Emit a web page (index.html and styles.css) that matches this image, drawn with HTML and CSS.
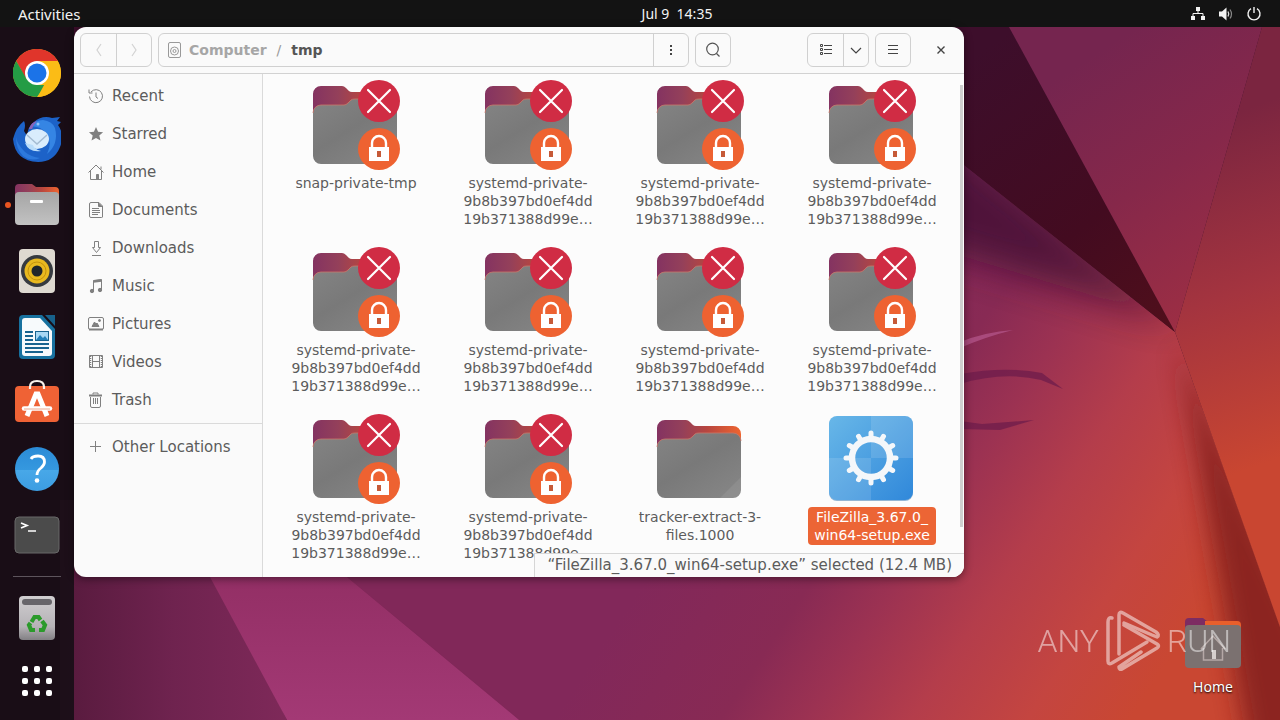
FILE: index.html
```html
<!DOCTYPE html>
<html lang="en">
<head>
<meta charset="utf-8">
<title>tmp</title>
<link rel="stylesheet" href="styles.css">
</head>
<body>
<svg class="wallpaper" viewBox="0 0 1280 720" preserveAspectRatio="none" aria-hidden="true">
  <defs>
    <linearGradient id="w-low" gradientUnits="userSpaceOnUse" x1="716" y1="472" x2="1119" y2="737">
      <stop offset="0" stop-color="#82285a"/><stop offset=".29" stop-color="#882a54"/><stop offset=".44" stop-color="#9c3252"/><stop offset=".62" stop-color="#b43d4b"/><stop offset=".82" stop-color="#c44540"/><stop offset="1" stop-color="#c94732"/>
    </linearGradient>
    <linearGradient id="w-up" gradientUnits="userSpaceOnUse" x1="1040" y1="90" x2="1190" y2="320">
      <stop offset="0" stop-color="#75254f"/><stop offset=".5" stop-color="#86284a"/><stop offset="1" stop-color="#9c2e44"/>
    </linearGradient>
    <linearGradient id="w-dark" gradientUnits="userSpaceOnUse" x1="970" y1="60" x2="1170" y2="330">
      <stop offset="0" stop-color="#3d0e2b"/><stop offset=".6" stop-color="#430b20"/><stop offset="1" stop-color="#500f1b"/>
    </linearGradient>
    <linearGradient id="w-right" gradientUnits="userSpaceOnUse" x1="1215" y1="120" x2="1330" y2="440">
      <stop offset="0" stop-color="#7b2540"/><stop offset=".5" stop-color="#a4343f"/><stop offset="1" stop-color="#c94631"/>
    </linearGradient>
    <linearGradient id="w-left" x1="0" x2="1" y1="0" y2="0">
      <stop offset="0" stop-color="#571a3d"/><stop offset=".5" stop-color="#6f234f"/><stop offset="1" stop-color="#7e2959"/>
    </linearGradient>
    <linearGradient id="w-beam" x1="0" x2="0" y1="0" y2="1">
      <stop offset="0" stop-color="#932f65"/><stop offset="1" stop-color="#a33975"/>
    </linearGradient>
    <clipPath id="w-clip"><path d="M940 146 1175 332 1282 632V720H940z"/></clipPath>
    <filter id="w-blur" x="-50%" y="-20%" width="200%" height="140%"><feGaussianBlur stdDeviation="12"/></filter>
    <filter id="w-haze" x="-50%" y="-50%" width="200%" height="200%"><feGaussianBlur stdDeviation="18"/></filter>
  </defs>
  <path fill="#3a0d29" d="M0 0h1280v720H0z"/>
  <path fill="url(#w-low)" d="M940 146 1175 332 1282 632V720H300V400z"/>
  <g clip-path="url(#w-clip)">
    <path fill="#3c0c30" opacity=".75" filter="url(#w-haze)" d="M1180 322 860 60V225z"/>
    <path fill="#7d1b1b" opacity=".8" filter="url(#w-blur)" d="M1178 345 1310 640V760H1250z"/>
  </g>
  <path fill="url(#w-dark)" d="M940 27H1009L1175 332 940 146z"/>
  <path fill="url(#w-up)" d="M1009 27H1262L1175 332z"/>
  <path fill="url(#w-right)" d="M1262 27H1280V627L1175 332z"/>
  <path fill="url(#w-left)" d="M60 500H180L287 720H60z"/>
  <path fill="url(#w-beam)" d="M210 577H347L519 720H287z"/>
  <path fill="#812859" d="M255 420H520V720L347 577z"/>
  <path fill="#b05286" opacity=".8" d="M960 342Q985 332 1013 330 985 337 960 348z"/>
  <path fill="#6e1c4b" opacity=".75" d="M960 374Q1005 366 1042 373L1063 389 1041 380Q1003 371 960 384zM960 421 982 424 1034 420 1000 430 960 429z"/>
</svg>

<svg class="defs" aria-hidden="true">
  <defs>
    <linearGradient id="tab" x1="0" x2="1" y1="0" y2="0"><stop offset="0" stop-color="#843361"/><stop offset=".3" stop-color="#94405a"/><stop offset=".6" stop-color="#b8463f"/><stop offset="1" stop-color="#ee6530"/></linearGradient>
    <linearGradient id="front" x1="0" x2=".8" y1="0" y2="1"><stop offset="0" stop-color="#848484"/><stop offset=".5" stop-color="#797979"/><stop offset="1" stop-color="#858585"/></linearGradient>
    <linearGradient id="silver" x1="0" x2="0" y1="0" y2="1"><stop offset="0" stop-color="#a5a5a5"/><stop offset="1" stop-color="#c2c2c2"/></linearGradient>
    <linearGradient id="bin" x1="0" x2="0" y1="0" y2="1"><stop offset="0" stop-color="#d0ced0"/><stop offset=".7" stop-color="#b5b2b6"/><stop offset="1" stop-color="#828084"/></linearGradient>
    <linearGradient id="exe" x1="0" x2="1" y1="0" y2="1"><stop offset="0" stop-color="#68b7e8"/><stop offset="1" stop-color="#3088da"/></linearGradient>
    <linearGradient id="help" x1="0" x2="0" y1="0" y2="1"><stop offset="0" stop-color="#2b8bd6"/><stop offset=".52" stop-color="#3598df"/><stop offset=".53" stop-color="#48a8e8"/><stop offset="1" stop-color="#3c9de2"/></linearGradient>
    <symbol id="folder" viewBox="0 0 96 96">
      <path fill="url(#tab)" d="M5 78V17a8 8 0 0 1 8-8h21q2 0 4 2l3 3q1 1 3 1h37a8 8 0 0 1 8 8v55z"/>
      <path fill="url(#front)" d="M5 79V36a8 8 0 0 1 8-8h23q2 0 4-2l3-3q1-1 4-1h34a8 8 0 0 1 8 8v49a8 8 0 0 1-8 8H13a8 8 0 0 1-8-8z"/>
      <path fill="none" stroke="#c9796a" stroke-width=".8" d="M5 36a8 8 0 0 1 8-8h23q2 0 4-2l3-3q1-1 4-1h34a8 8 0 0 1 8 8"/>
    </symbol>
    <symbol id="locked" viewBox="0 0 96 96">
      <use href="#folder"/>
      <circle cx="71" cy="24" r="21" fill="#d02c44"/><path d="M60 13 82 35M82 13 60 35" stroke="#fff" stroke-width="2.200" stroke-linecap="round"/>
      <circle cx="71" cy="72" r="21" fill="#ee6231"/><path fill="#fff" d="M61 70h20v14H61z"/><path d="M64 71v-5a7 7 0 0 1 14 0v5" fill="none" stroke="#fff" stroke-width="2.400"/><path fill="#c65a38" d="M69 74h4v6h-4z"/>
    </symbol>
    <symbol id="open-folder" viewBox="0 0 96 96"><use href="#folder"/><path d="M68 87 89 66V79a8 8 0 0 1-8 8z" fill="#fff" opacity=".08"/></symbol>
    <symbol id="setup" viewBox="0 0 96 96">
      <rect x="5" y="6" width="84" height="84" rx="8" fill="#2a6fae" opacity=".5"/>
      <rect x="5" y="5" width="84" height="84" rx="8" fill="url(#exe)"/>
      <path fill="#fff" opacity=".12" d="M47 5h34a8 8 0 0 1 8 8v34H47z"/><path fill="#fff" opacity=".12" d="M5 47h42v42H13a8 8 0 0 1-8-8z"/>
      <circle cx="47" cy="47" r="19" fill="none" stroke="#f4f7fa" stroke-width="6.500"/>
      <g stroke="#f4f7fa" stroke-width="5" stroke-linecap="round"><path d="M47 22v5M47 67v5M22 47h5M67 47h5M34.500 25.300l2.500 4.400M59.500 25.300l-2.500 4.400M34.500 68.700l2.500-4.400M59.500 68.700l-2.500-4.400M25.300 34.500l4.400 2.500M68.700 34.500l-4.400 2.500M25.300 59.500l4.400-2.500M68.700 59.500l-4.400-2.500"/></g>
    </symbol>
  </defs>
</svg>

<header class="topbar">
  <button class="activities">Activities</button>
  <time class="clock">Jul 9&nbsp; 14:35</time>
  <button class="tray" aria-label="System menu">
    <svg width="16" height="16" viewBox="0 0 16 16"><path fill="#f2f2f2" d="M6 1h4v4H6zM1 10h4v4H1zM11 10h4v4h-4z"/><path d="M8 5v2.500M3 10V7.500h10V10" fill="none" stroke="#f2f2f2"/></svg>
    <svg width="16" height="16" viewBox="0 0 16 16"><path fill="#f2f2f2" d="M1 5.500h3L8.500 1.500v13L4 10.500H1z"/><path d="M10 5.500q1.500 2.500 0 5" fill="none" stroke="#ddd" stroke-width="1.300"/><path d="M12 3.500q3 4.500 0 9" fill="none" stroke="#888" stroke-width="1.200"/></svg>
    <svg width="16" height="16" viewBox="0 0 16 16"><path d="M5 2.700a6 6 0 1 0 6 0M8 1v6" fill="none" stroke="#f2f2f2" stroke-width="1.400"/></svg>
  </button>
</header>

<div class="shell">
  <nav class="dock" aria-label="Dock">
    <button class="app" aria-label="Google Chrome"><svg viewBox="0 0 48 48"><circle cx="24" cy="24" r="24" fill="#fbbc16"/><path fill="#e0352b" d="M3.200 12A24 24 0 0 1 44.800 12H24L13 30z"/><path fill="#249c45" d="M3.200 12 13.600 30 24 36h9L24 48A24 24 0 0 1 3.200 12z"/><path fill="#fbbc16" d="M24 12h20.800A24 24 0 0 1 24.500 48L34.400 30z"/><circle cx="24" cy="24" r="12" fill="#fff"/><circle cx="24" cy="24" r="9.500" fill="#1b73e8"/></svg></button>
    <button class="app" aria-label="Thunderbird"><svg viewBox="0 0 48 48"><path fill="#1c62c8" d="M0 24Q3 12 11 6q2 4 0 10 2 3 3 5 1-10 7-14 8-7 18-4l8-1-3 4 4 1-3 3q7 10 2 22-6 15-22 15Q2 46 0 24z"/><path fill="#3585e4" d="M17 12q5-7 13-7 9 1 12 8 4 16-8 26 6-12-1-21-7-8-16-6z"/><path fill="#2d79dd" d="M3 22q1 7 9 15 6 5 15 6-9 4-17-2Q3 34 3 22z"/><path fill="#8a63b8" d="M16 14q2-7 8-8-4 4-5 8z"/><ellipse cx="24" cy="24" rx="12" ry="10" fill="#d9ecfc"/><path d="m14 20 10 9 10-9" fill="none" stroke="#a5bcd2" stroke-width="1.500"/><path d="M12 28q4 10 16 8-7-2-8-6z" fill="#b9dcfa"/><circle cx="25" cy="9" r="1.500" fill="#8fc2f7"/></svg></button>
    <button class="app running" aria-label="Files"><svg viewBox="0 0 48 48"><path fill="url(#tab)" d="M2 40V7a4 4 0 0 1 4-4h13l4 3h19a4 4 0 0 1 4 4v30z"/><rect x="2" y="11" width="44" height="33" rx="4" fill="url(#silver)"/><rect x="17" y="19" width="13" height="3" rx="1" fill="#fff"/></svg></button>
    <button class="app" aria-label="Rhythmbox"><svg viewBox="0 0 48 48"><rect x="6" y="2" width="36" height="44" rx="4" fill="#ded9d1"/><circle cx="24" cy="24" r="16" fill="#363a40"/><circle cx="24" cy="24" r="12.500" fill="#e9b91f"/><circle cx="24" cy="24" r="9" fill="none" stroke="#c4920c" stroke-width="1"/><circle cx="24" cy="24" r="5.500" fill="#20252b"/></svg></button>
    <button class="app" aria-label="LibreOffice Writer"><svg viewBox="0 0 48 48"><path fill="#17719f" d="M10 2h19l13 14v26a4 4 0 0 1-4 4H10a4 4 0 0 1-4-4V6a4 4 0 0 1 4-4z"/><path fill="#f7fafc" d="M12 5h15l12 13v22q0 3-3 3H12q-3 0-3-3V8q0-3 3-3z"/><path fill="#17618b" d="M32 2h10v11z"/><path d="M12 19h8M12 23h8M12 27h8M12 31h24M12 35h24M12 39h18" stroke="#19648f" stroke-width="2"/><rect x="22.500" y="18.500" width="13" height="9" fill="#a8d8f4" stroke="#19648f"/><path fill="#2480b9" d="m23 27 4-5 3 3 2-2 3 4z"/></svg></button>
    <button class="app" aria-label="Ubuntu Software"><svg viewBox="0 0 48 48"><rect x="2" y="7" width="44" height="36" rx="4" fill="#ef6235"/><path d="M17 10V8q0-6 7-6t7 6v2" fill="none" stroke="#f8f3ec" stroke-width="2.200"/><path d="M14 37 23 15h2l9 22" fill="none" stroke="#fff" stroke-width="5"/><path d="M11 29.500h26" stroke="#fff" stroke-width="4.500" stroke-linecap="round"/><path d="M11 30h26" stroke="#eba88f" stroke-width="1"/></svg></button>
    <button class="app help" aria-label="Help"><svg viewBox="0 0 48 48"><circle cx="24" cy="24" r="22" fill="url(#help)"/><path d="M18 14q1.500-3 7-3 6.500 0 6.500 6 0 3-3.500 6-4 3-4 7" fill="none" stroke="#fff" stroke-width="2.800"/><circle cx="24" cy="35.500" r="2.300" fill="#fff"/></svg></button>
    <button class="app" aria-label="Terminal"><svg viewBox="0 0 48 48"><rect x="2" y="6" width="44" height="36" rx="4" fill="#4b4b4b" stroke="#686868"/><path d="m8 12 6 2.500L8 17M15 20h8" fill="none" stroke="#fff" stroke-width="1.700"/></svg></button>
    <hr class="dock-line">
    <button class="app" aria-label="Trash"><svg viewBox="0 0 48 48"><rect x="6" y="2" width="36" height="44" rx="4" fill="url(#bin)"/><rect x="9" y="5" width="30" height="6" rx="3" fill="#67656a"/><g fill="none" stroke="#2b9a2b" stroke-width="4.200"><path d="m18.500 28 3-5h4l2 3"/><path d="m29 27 3 4-2 5h-4"/><path d="M22 36h-4l-2-5 1.500-2"/></g></svg></button>
    <button class="app show-apps" aria-label="Show Applications"><svg viewBox="0 0 48 48" fill="#fff"><rect x="9" y="9" width="6" height="6" rx="2"/><rect x="21" y="9" width="6" height="6" rx="2"/><rect x="33" y="9" width="6" height="6" rx="2"/><rect x="9" y="21" width="6" height="6" rx="2"/><rect x="21" y="21" width="6" height="6" rx="2"/><rect x="33" y="21" width="6" height="6" rx="2"/><rect x="9" y="33" width="6" height="6" rx="2"/><rect x="21" y="33" width="6" height="6" rx="2"/><rect x="33" y="33" width="6" height="6" rx="2"/></svg></button>
  </nav>

  <main class="desktop">
    <section class="window" aria-label="Files">
      <header class="toolbar">
        <div class="group">
          <button class="tool" aria-label="Back" disabled><svg width="16" height="16" viewBox="0 0 16 16"><path d="M10 2 6 8l4 6" fill="none" stroke="#d2d2d2" stroke-width="1.200"/></svg></button>
          <button class="tool" aria-label="Forward" disabled><svg width="16" height="16" viewBox="0 0 16 16"><path d="m6 2 4 6-4 6" fill="none" stroke="#d2d2d2" stroke-width="1.200"/></svg></button>
        </div>
        <div class="group path">
          <div class="crumbs">
            <svg width="16" height="16" viewBox="0 0 16 16" fill="none" stroke="#999"><rect x="2.500" y=".5" width="12" height="15" rx="1.500"/><circle cx="8.500" cy="9" r="4"/><circle cx="8.500" cy="9" r="1.500"/></svg>
            <a class="crumb" href="#">Computer</a><span class="slash">/</span><a class="crumb current" href="#">tmp</a>
          </div>
          <button class="tool" aria-label="Path menu"><svg width="16" height="16" viewBox="0 0 16 16" fill="#444"><path d="M7 3h2v2H7zM7 7h2v2H7zM7 11h2v2H7z"/></svg></button>
        </div>
        <button class="tool single" aria-label="Search"><svg width="16" height="16" viewBox="0 0 16 16" fill="none" stroke="#555" stroke-width="1.200"><circle cx="7.500" cy="7" r="5.800"/><path d="m11.500 11.500 3 3"/></svg></button>
        <div class="group right">
          <button class="tool" aria-label="List view"><svg width="16" height="16" viewBox="0 0 16 16" fill="none" stroke="#444"><path d="M2.500 2.500h2v2h-2zM2.500 6.500h2v2h-2zM2.500 10.500h2v2h-2zM6 3.500h8M6 7.500h8M6 11.500h8"/></svg></button>
          <button class="tool narrow" aria-label="View options"><svg width="12" height="16" viewBox="0 0 12 16"><path d="m1 6 5 5 5-5" fill="none" stroke="#444" stroke-width="1.200"/></svg></button>
        </div>
        <button class="tool single" aria-label="Main menu"><svg width="16" height="16" viewBox="0 0 16 16" stroke="#444"><path d="M3 3.500h10M3 7.500h10M3 11.500h10"/></svg></button>
        <button class="close" aria-label="Close"><svg width="16" height="16" viewBox="0 0 16 16"><path d="m4.500 4.500 7 7M11.500 4.500l-7 7" stroke="#444" stroke-width="1.400"/></svg></button>
      </header>
      <div class="body">
        <nav class="places" aria-label="Places">
          <a class="place" href="#"><svg viewBox="0 0 16 16"><path d="M3 4a6.500 6.500 0 1 1-1.500 4.500M1 1.500V5h3.500M8 4.500V9l2 1.500"/></svg>Recent</a>
          <a class="place" href="#"><svg viewBox="0 0 16 16"><path fill="#808080" stroke="none" d="m8 1 2.100 4.800 5 .4-3.800 3.400 1.200 5L8 12l-4.500 2.600 1.200-5L.9 6.200l5-.4z"/></svg>Starred</a>
          <a class="place" href="#"><svg viewBox="0 0 16 16"><path d="M.5 8.500 8 1l7.500 7.500M2.500 7v8.500h11V7M13 2.500v3"/><path fill="#808080" d="M8.500 10.500h2v5h-2z"/></svg>Home</a>
          <a class="place" href="#"><svg viewBox="0 0 16 16"><path d="M3 .500h8l3.500 3.500v11q0 .5-1 .5H3q-1.500 0-1.500-1.500V2Q1.500.5 3 .5zM4 6.500h7M4 8.500h8M4 10.500h8M4 12.500h6"/><path fill="#808080" d="M10.500 1v3.500H14z"/></svg>Documents</a>
          <a class="place" href="#"><svg viewBox="0 0 16 16"><path d="M6.500 1.500h4v6h2l-4 5-4-5h2zM4 15.500h9"/></svg>Downloads</a>
          <a class="place" href="#"><svg viewBox="0 0 16 16"><path d="M5.500 13V2.500l8-1V12"/><path d="M5.500 3.500l8-1" stroke-width="2.500"/><circle cx="4" cy="13" r="1.700" fill="#808080"/><circle cx="12" cy="12" r="1.700" fill="#808080"/></svg>Music</a>
          <a class="place" href="#"><svg viewBox="0 0 16 16"><rect x=".5" y="1.500" width="15" height="12" rx="1.500"/><path d="M1 13.500h14" stroke-width="2"/><path fill="#808080" d="M4 10.500 6.500 6l1.500 2 1-1 2 3.500z"/><circle cx="11.500" cy="4.500" r="1" fill="#808080"/></svg>Pictures</a>
          <a class="place" href="#"><svg viewBox="0 0 16 16"><path d="M1.500 1.500h13v12h-13zM4.500 1.500v12M11.500 1.500v12M4.500 7.500h7"/><path stroke-dasharray="1 1" d="M2.500 2v11M13.500 2v11" stroke-width="1.500"/></svg>Videos</a>
          <a class="place" href="#"><svg viewBox="0 0 16 16"><path d="M2.500 5v9q0 1.500 1.500 1.500h7q1.500 0 1.500-1.500V5M5.500 6v6M7.500 6v6M9.500 6v6M5 2.500V1h5v1.500"/><path d="M1 3.500h13" stroke-width="2"/></svg>Trash</a>
          <hr class="places-line">
          <a class="place" href="#"><svg viewBox="0 0 16 16"><path d="M7.500 2v11M2 7.500h11"/></svg>Other Locations</a>
        </nav>
        <div class="view">
          <div class="files">
            <button class="file"><svg class="thumb"><use href="#locked"/></svg><span class="name">snap-private-tmp</span></button>
            <button class="file"><svg class="thumb"><use href="#locked"/></svg><span class="name">systemd-private-<br>9b8b397bd0ef4dd<br>19b371388d99e…</span></button>
            <button class="file"><svg class="thumb"><use href="#locked"/></svg><span class="name">systemd-private-<br>9b8b397bd0ef4dd<br>19b371388d99e…</span></button>
            <button class="file"><svg class="thumb"><use href="#locked"/></svg><span class="name">systemd-private-<br>9b8b397bd0ef4dd<br>19b371388d99e…</span></button>
            <button class="file"><svg class="thumb"><use href="#locked"/></svg><span class="name">systemd-private-<br>9b8b397bd0ef4dd<br>19b371388d99e…</span></button>
            <button class="file"><svg class="thumb"><use href="#locked"/></svg><span class="name">systemd-private-<br>9b8b397bd0ef4dd<br>19b371388d99e…</span></button>
            <button class="file"><svg class="thumb"><use href="#locked"/></svg><span class="name">systemd-private-<br>9b8b397bd0ef4dd<br>19b371388d99e…</span></button>
            <button class="file"><svg class="thumb"><use href="#locked"/></svg><span class="name">systemd-private-<br>9b8b397bd0ef4dd<br>19b371388d99e…</span></button>
            <button class="file"><svg class="thumb"><use href="#locked"/></svg><span class="name">systemd-private-<br>9b8b397bd0ef4dd<br>19b371388d99e…</span></button>
            <button class="file"><svg class="thumb"><use href="#locked"/></svg><span class="name">systemd-private-<br>9b8b397bd0ef4dd<br>19b371388d99e…</span></button>
            <button class="file"><svg class="thumb"><use href="#open-folder"/></svg><span class="name">tracker-extract-3-<br>files.1000</span></button>
            <button class="file selected"><svg class="thumb"><use href="#setup"/></svg><span class="name">FileZilla_3.67.0_<br>win64-setup.exe</span></button>
          </div>
          <div class="scrollbar"></div>
          <p class="status">“FileZilla_3.67.0_win64-setup.exe” selected (12.4 MB)</p>
        </div>
      </div>
    </section>
    <button class="shortcut">
      <svg width="56" height="52" viewBox="0 0 56 52"><path fill="#7d2c62" d="M0 46V5q0-4 4-4h14l5 4h5v10z"/><path fill="#e85f2c" d="M20 4h32q4 0 4 4v8H20z"/><rect y="8" width="56" height="43" rx="4" fill="#7b7170"/><path d="M16 32 28 19l12 13M18.500 31v12h19V31" fill="none" stroke="#b5a8a6" stroke-width="1.500"/><path fill="#d6cfcd" d="M27 33h4v9h-4z"/></svg>
      <span>Home</span>
    </button>
    <div class="watermark">
      <span>ANY</span>
      <svg width="56" height="62" viewBox="0 0 56 62" fill="none" stroke="#fff" stroke-width="3.500" stroke-linejoin="round" stroke-linecap="round"><path d="M7 8Q3 7 3 12V51q0 4 4 2L42 32"/><path d="M14 44V5q0-4 4-2L51 22q4 3 1 5L47 25 19 13"/><path d="m19 15 33 19q3 2 0 4L17 59q-3 1-3-2L36 42"/></svg>
      <span>RUN</span>
    </div>
  </main>
</div>
</body>
</html>
```
FILE: styles.css
```css
* { box-sizing: border-box; }

body {
  margin: 0;
  height: 100vh;
  display: flex;
  flex-direction: column;
  overflow: hidden;
  background: #3a0d29;
  font: 15px/18px "DejaVu Sans", sans-serif;
  color: #5c5c5c;
}

button {
  margin: 0;
  padding: 0;
  border: 0;
  background: none;
  font: inherit;
  color: inherit;
}

a { color: inherit; text-decoration: none; }
svg { display: block; flex: none; }
.defs { position: absolute; width: 0; height: 0; }
.wallpaper { position: absolute; inset: 0; z-index: -1; width: 100%; height: 100%; }

/* The clock is centred over the desktop, to the right of the dock. */
.topbar {
  display: grid;
  grid-template-columns: 1fr auto 1fr;
  align-items: center;
  height: 27px;
  padding: 0 18px 0 92px;
  background: #131313;
  color: #f2f2f2;
  font: 14px/20px "Noto Sans", sans-serif;
}
.activities { justify-self: start; margin-left: -74px; font-size: 15px; }
.tray { justify-self: end; display: flex; gap: 12px; }

.shell { flex: 1; display: flex; min-height: 0; }

.dock {
  width: 74px;
  display: flex;
  flex-direction: column;
  align-items: center;
  gap: 18px;
  padding-top: 22px;
  background: rgba(20, 14, 20, .86);
}
.app { position: relative; width: 48px; height: 48px; flex: none; }
.app svg { width: 48px; height: 48px; }
.running::before {
  content: "";
  position: absolute;
  left: -8px;
  top: 21px;
  width: 6px;
  height: 6px;
  border-radius: 3px;
  background: #e95420;
}
.dock-line { width: 48px; margin: -1px 0; border: 0; border-top: 1px solid #5d545c; }
.show-apps { margin-top: -3px; }

.desktop {
  flex: 1;
  position: relative;
  display: grid;
  grid-template-columns: minmax(0, 1fr) 316px;
  grid-template-rows: minmax(0, 1fr) 143px;
}

.window {
  display: flex;
  flex-direction: column;
  overflow: hidden;
  border-radius: 12px;
  background: #fafafa;
  box-shadow: 0 2px 8px rgba(0, 0, 0, .45);
}

.toolbar {
  display: flex;
  align-items: center;
  gap: 6px;
  height: 47px;
  padding: 0 6px;
  border-bottom: 1px solid #d2d2d2;
}
.group, .single { display: flex; height: 34px; border: 1px solid #d0d0d0; border-radius: 6px; }
.tool { display: flex; align-items: center; justify-content: center; width: 35px; }
.tool + .tool, .crumbs + .tool { border-left: 1px solid #d0d0d0; }
.single { width: 36px; }
.tool.narrow { width: 25px; }
.path { width: 531px; flex: 0 1 auto; }
.crumbs { flex: 1; display: flex; align-items: center; padding-left: 7px; font-size: 14px; }
.crumb { margin-left: 7px; font-weight: bold; color: #a6a6a6; }
.slash { margin-left: 10px; color: #999; }
.current { margin-left: 10px; color: #555; }
.right { margin-left: auto; }
.close { display: flex; width: 41px; justify-content: center; padding-left: 6px; }

.body { flex: 1; display: flex; min-height: 0; }
.places { width: 189px; padding-top: 3px; border-right: 1px solid #dadada; }
.place { display: flex; align-items: center; gap: 8px; height: 38px; padding-left: 14px; }
.place svg { width: 16px; height: 16px; fill: none; stroke: #808080; }
.places-line { margin: 4px 0; border: 0; border-top: 1px solid #dadada; }

.view { flex: 1; position: relative; min-width: 0; overflow: hidden; background: #fcfcfc; }
.files {
  display: grid;
  grid-template-columns: repeat(4, minmax(0, 1fr));
  grid-auto-rows: 151px;
  row-gap: 16px;
  padding: 3px 6px 0 7px;
  font-size: 14px;
}
.file { display: flex; flex-direction: column; align-items: center; }
.thumb { width: 96px; height: 96px; }
.name { padding: 1px 6px; border-radius: 4px; }
.selected .name { background: #ec6535; color: #fff; }
.scrollbar { position: absolute; right: 1px; top: 11px; bottom: 50px; width: 3px; background: #cfcfcf; }
.status {
  position: absolute;
  right: 0;
  bottom: 0;
  margin: 0;
  padding: 2px 12px 3px;
  border: 1px solid #d6d6d6;
  border-width: 1px 0 0 1px;
  background: #fafafa;
}

.shortcut {
  position: absolute;
  right: 39px;
  bottom: 23px;
  display: flex;
  flex-direction: column;
  align-items: center;
  gap: 8px;
  color: #fff;
  font: 14px/20px "Noto Sans", sans-serif;
  text-shadow: 0 1px 2px #000;
}
.watermark {
  position: absolute;
  right: 49px;
  bottom: 48px;
  display: flex;
  align-items: center;
  gap: 6px;
  color: #fff;
  opacity: .5;
  font: 300 32px/62px Roboto, sans-serif;
}
```
